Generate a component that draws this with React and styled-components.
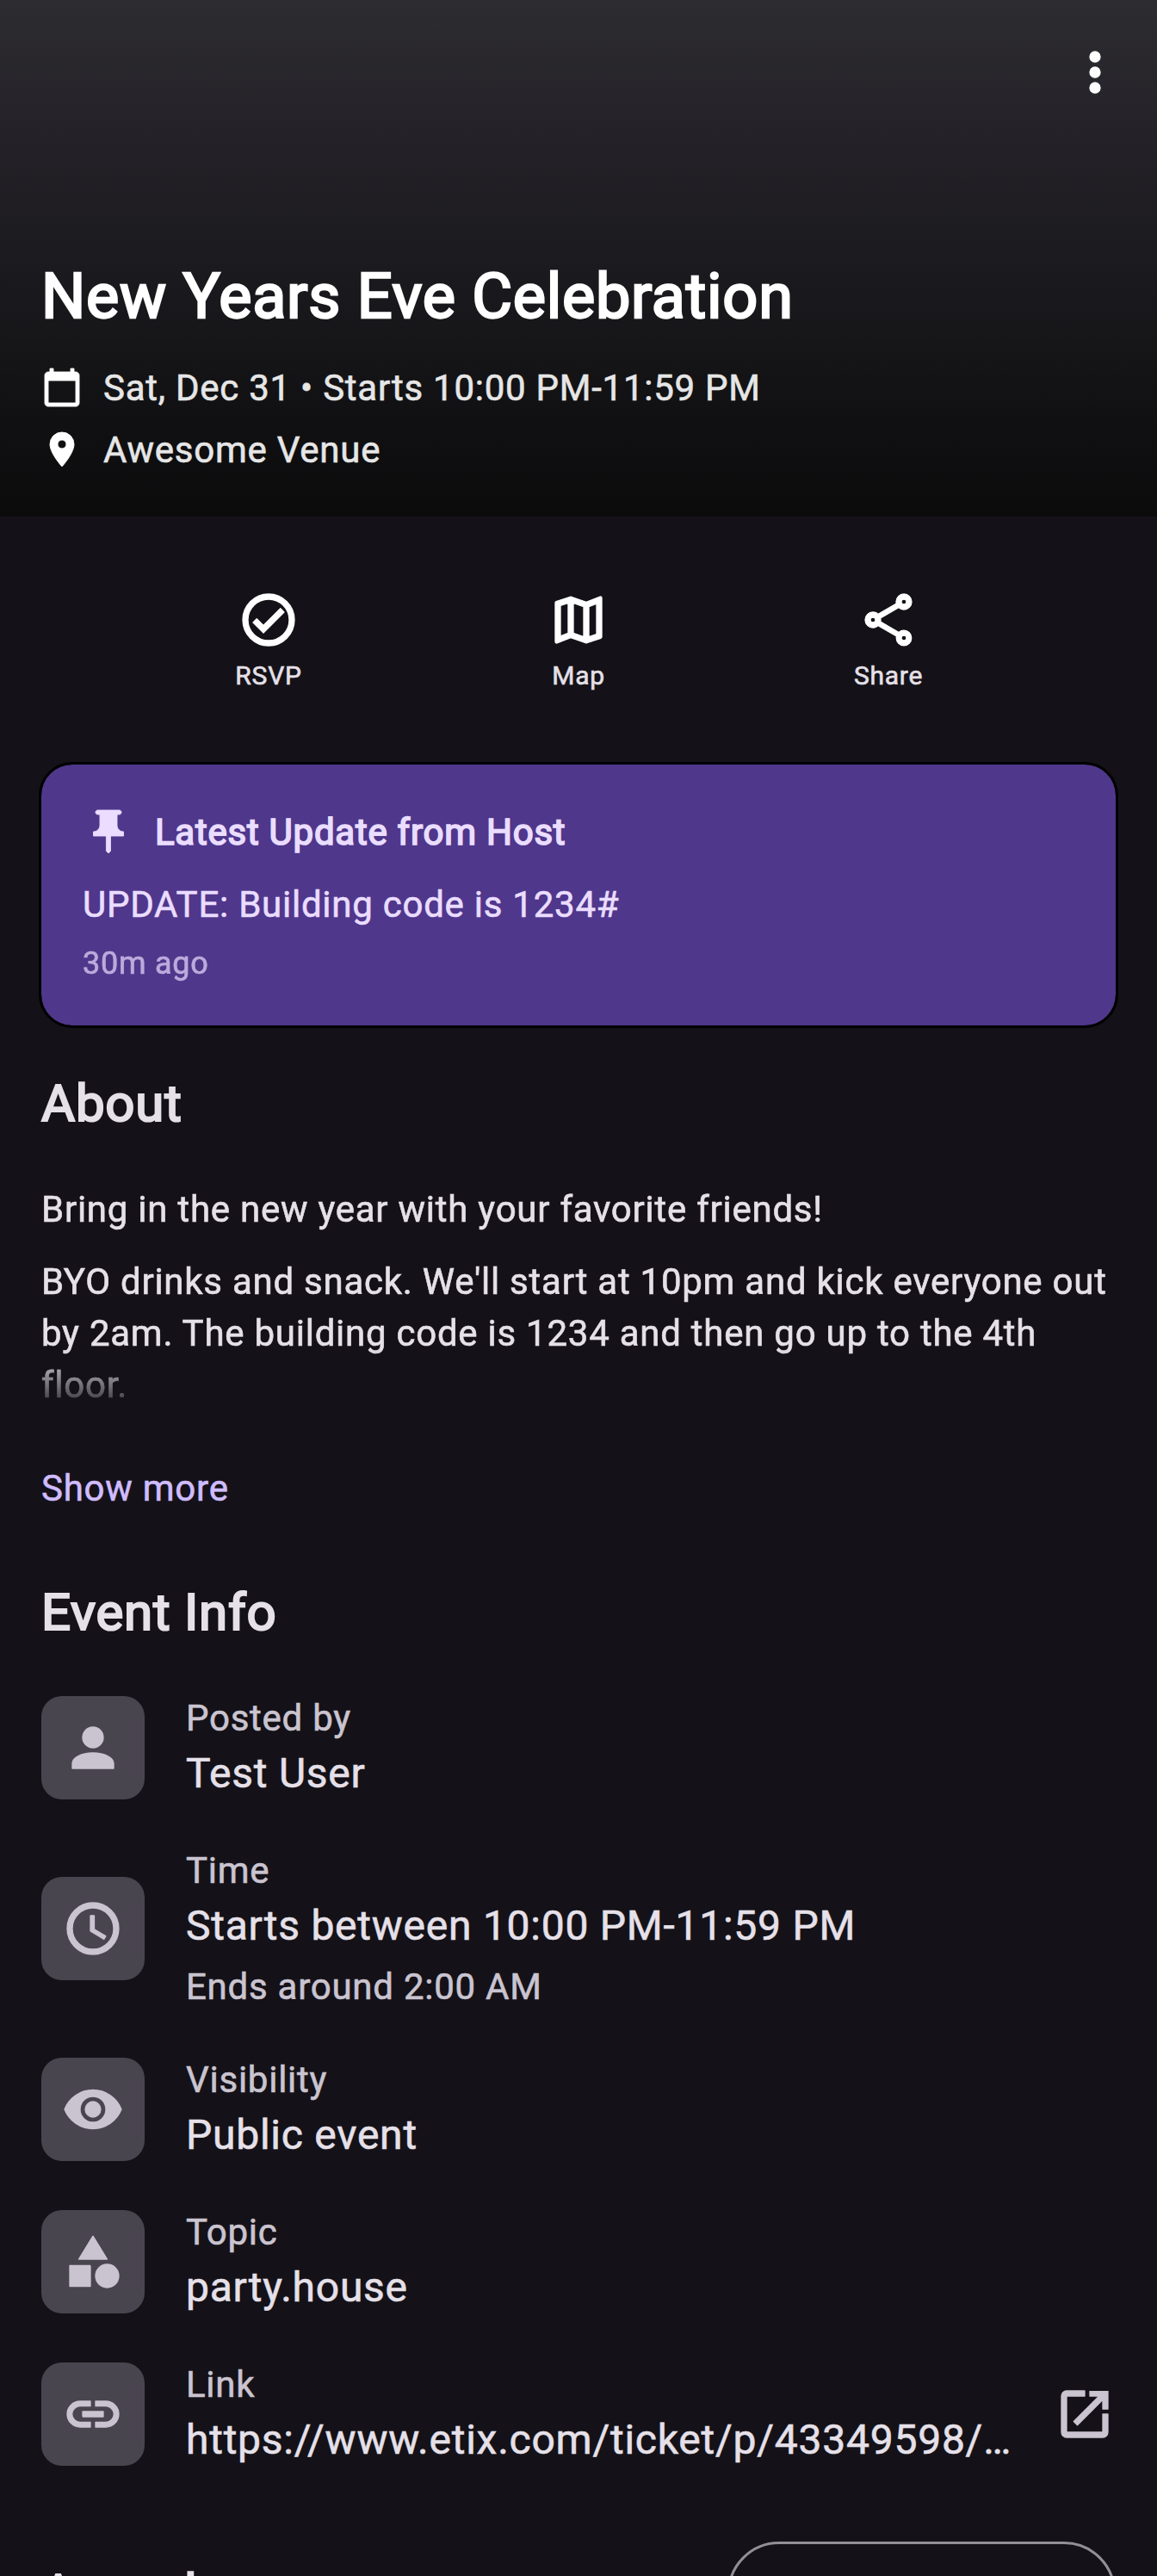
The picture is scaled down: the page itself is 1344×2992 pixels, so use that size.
import React from "react";
import styled, { createGlobalStyle } from "styled-components";

const colors = {
  background: "#141218",
  text: "#e6e0e9",
  muted: "#cac4d0",
  tile: "#49454f",
  primary: "#d0bcff",
  container: "#4f378b",
  onContainer: "#eaddff",
  outline: "#938f99",
};

const GlobalStyle = createGlobalStyle`
  *, *::before, *::after { box-sizing: border-box; }
  body { margin: 0; background: ${colors.background}; }
`;

const Screen = styled.main`
  width: 1344px;
  height: 2992px;
  overflow: hidden;
  background: ${colors.background};
  color: ${colors.text};
  font-family: Roboto, "Liberation Sans", sans-serif;
  font-size: 42px;
  line-height: 60px;
  letter-spacing: 0.75px;
  -webkit-text-stroke: 0.6px currentColor;
`;

/* Heavier text is the regular cut with a thickened outline. */
const Heading = styled.h2`
  margin: 0;
  font-weight: 400;
  font-size: 60px;
  line-height: 84px;
  -webkit-text-stroke: 2.2px currentColor;
`;

const Svg = styled.svg`
  display: block;
  flex: none;
  width: ${(p) => p.$size}px;
  height: ${(p) => p.$size}px;
  fill: currentColor;
  stroke: currentColor;
  stroke-width: ${(p) => (24 * p.$weight) / p.$size};
  stroke-linejoin: round;
`;

const Icon = ({ d, size = 72, weight = 1.3 }) => (
  <Svg viewBox="0 0 24 24" $size={size} $weight={weight} aria-hidden="true">
    <path d={d} />
  </Svg>
);

const paths = {
  dots: "M12,16A2,2 0 0,1 14,18A2,2 0 0,1 12,20A2,2 0 0,1 10,18A2,2 0 0,1 12,16M12,10A2,2 0 0,1 14,12A2,2 0 0,1 12,14A2,2 0 0,1 10,12A2,2 0 0,1 12,10M12,4A2,2 0 0,1 14,6A2,2 0 0,1 12,8A2,2 0 0,1 10,6A2,2 0 0,1 12,4Z",
  calendar:
    "M20 3h-1V1h-2v2H7V1H5v2H4c-1.1 0-2 .9-2 2v16c0 1.1.9 2 2 2h16c1.1 0 2-.9 2-2V5c0-1.1-.9-2-2-2zm0 18H4V8h16v13z",
  marker:
    "M12,11.5A2.5,2.5 0 0,1 9.5,9A2.5,2.5 0 0,1 12,6.5A2.5,2.5 0 0,1 14.5,9A2.5,2.5 0 0,1 12,11.5M12,2A7,7 0 0,0 5,9C5,14.25 12,22 12,22C12,22 19,14.25 19,9A7,7 0 0,0 12,2Z",
  check:
    "M12 2C6.5 2 2 6.5 2 12S6.5 22 12 22 22 17.5 22 12 17.5 2 12 2M12 20C7.59 20 4 16.41 4 12S7.59 4 12 4 20 7.59 20 12 16.41 20 12 20M16.59 7.58L10 14.17L7.41 11.59L6 13L10 17L18 9L16.59 7.58Z",
  map: "M20.5,3L20.34,3.03L15,5.1L9,3L3.36,4.9C3.15,4.97 3,5.15 3,5.38V20.5A0.5,0.5 0 0,0 3.5,21L3.66,20.97L9,18.9L15,21L20.64,19.1C20.85,19.03 21,18.85 21,18.62V3.5A0.5,0.5 0 0,0 20.5,3M10,5.47L14,6.87V18.53L10,17.13V5.47M5,6.46L8,5.45V17.15L5,18.31V6.46M19,17.54L16,18.55V6.86L19,5.7V17.54Z",
  share:
    "M18 16.08C17.24 16.08 16.56 16.38 16.04 16.85L8.91 12.7C8.96 12.47 9 12.24 9 12S8.96 11.53 8.91 11.3L15.96 7.19C16.5 7.69 17.21 8 18 8C19.66 8 21 6.66 21 5S19.66 2 18 2 15 3.34 15 5C15 5.24 15.04 5.47 15.09 5.7L8.04 9.81C7.5 9.31 6.79 9 6 9C4.34 9 3 10.34 3 12S4.34 15 6 15C6.79 15 7.5 14.69 8.04 14.19L15.16 18.34C15.11 18.55 15.08 18.77 15.08 19C15.08 20.61 16.39 21.91 18 21.91S20.92 20.61 20.92 19 19.61 16.08 18 16.08M18 4C18.55 4 19 4.45 19 5S18.55 6 18 6 17 5.55 17 5 17.45 4 18 4M6 13C5.45 13 5 12.55 5 12S5.45 11 6 11 7 11.45 7 12 6.55 13 6 13M18 20C17.45 20 17 19.55 17 19S17.45 18 18 18 19 18.45 19 19 18.55 20 18 20Z",
  pin: "M16 9V4h1c.55 0 1-.45 1-1s-.45-1-1-1H7c-.55 0-1 .45-1 1s.45 1 1 1h1v5c0 1.66-1.34 3-3 3v2h5.97v7l1 1 1-1v-7H19v-2c-1.66 0-3-1.34-3-3z",
  person:
    "M12,4A4,4 0 0,1 16,8A4,4 0 0,1 12,12A4,4 0 0,1 8,8A4,4 0 0,1 12,4M12,14C16.42,14 20,15.79 20,18V20H4V18C4,15.79 7.58,14 12,14Z",
  clock:
    "M12,20A8,8 0 0,0 20,12A8,8 0 0,0 12,4A8,8 0 0,0 4,12A8,8 0 0,0 12,20M12,2A10,10 0 0,1 22,12A10,10 0 0,1 12,22C6.47,22 2,17.5 2,12A10,10 0 0,1 12,2M12.5,7V12.25L17,14.92L16.25,16.15L11,13V7H12.5Z",
  eye: "M12,9A3,3 0 0,0 9,12A3,3 0 0,0 12,15A3,3 0 0,0 15,12A3,3 0 0,0 12,9M12,17A5,5 0 0,1 7,12A5,5 0 0,1 12,7A5,5 0 0,1 17,12A5,5 0 0,1 12,17M12,4.5C7,4.5 2.73,7.61 1,12C2.73,16.39 7,19.5 12,19.5C17,19.5 21.27,16.39 23,12C21.27,7.61 17,4.5 12,4.5Z",
  shapes:
    "M11,13.5V21.5H3V13.5H11M12,2L17.5,11H6.5L12,2M17.5,13C20,13 22,15 22,17.5C22,20 20,22 17.5,22C15,22 13,20 13,17.5C13,15 15,13 17.5,13Z",
  link: "M3.9,12C3.9,10.29 5.29,8.9 7,8.9H11V7H7A5,5 0 0,0 2,12A5,5 0 0,0 7,17H11V15.1H7C5.29,15.1 3.9,13.71 3.9,12M8,13H16V11H8V13M17,7H13V8.9H17C18.71,8.9 20.1,10.29 20.1,12C20.1,13.71 18.71,15.1 17,15.1H13V17H17A5,5 0 0,0 22,12A5,5 0 0,0 17,7Z",
  open: "M14,3V5H17.59L7.76,14.83L9.17,16.24L19,6.41V10H21V3M19,19H5V5H12V3H5C3.89,3 3,3.9 3,5V19A2,2 0 0,0 5,21H19A2,2 0 0,0 21,19V12H19V19Z",
};

const Hero = styled.header`
  display: flex;
  flex-direction: column;
  height: 600px;
  padding: 48px 36px 47px 48px;
  color: #fff;
  background: linear-gradient(
    #2d2c31 0,
    #242228 160px,
    #1c1b20 290px,
    #17171a 380px,
    #111113 480px,
    #0b0b0c 600px
  );
`;

const MenuButton = styled.button`
  align-self: flex-end;
  padding: 0;
  border: 0;
  background: none;
  color: inherit;
`;

const Title = styled.h1`
  margin: auto 0 27px;
  font-weight: 400;
  font-size: 72px;
  line-height: 96px;
  -webkit-text-stroke: 2.5px currentColor;
`;

const Facts = styled.div`
  display: flex;
  flex-direction: column;
  gap: 11px;
`;

const Fact = styled.div`
  display: flex;
  align-items: flex-start;
  gap: 24px;
  line-height: 61px;

  & > svg { margin-top: 6px; }
  & > span { color: #e6e6e6; -webkit-text-stroke-color: #e6e6e6; }
`;

const Actions = styled.nav`
  display: flex;
  justify-content: center;
  padding: 84px 0 78px;
`;

const Action = styled.button`
  display: flex;
  flex-direction: column;
  align-items: center;
  gap: 6px;
  width: 360px;
  padding: 0;
  border: 0;
  background: none;
  color: #fff;
  font: inherit;
  font-size: 30px;
  line-height: 45px;
  letter-spacing: inherit;

  & > span { color: ${colors.text}; }
`;

const UpdateCard = styled.section`
  margin: 0 45px;
  padding: 48px;
  border: 3px solid #000;
  border-radius: 39px;
  background: ${colors.container};
  background-clip: padding-box;
  color: ${colors.onContainer};
  line-height: 61px;
`;

const UpdateHeader = styled.div`
  display: flex;
  align-items: flex-start;
  gap: 24px;
  margin-bottom: 23px;
`;

const UpdateTitle = styled.span`
  -webkit-text-stroke: 1.7px currentColor;
`;

const UpdateTime = styled.div`
  margin-top: 14px;
  font-size: 36px;
  line-height: 48px;
  opacity: 0.7;
`;

const Section = styled.section`
  padding: 0 48px;
  margin-top: ${(p) => p.$top}px;
`;

const Description = styled.div`
  display: flex;
  flex-direction: column;
  gap: 24px;
  margin: 51px -24px 60px 0;
  mask-image: linear-gradient(#000 calc(100% - 72px), transparent calc(100% + 6px));

  & > p { margin: 0; }
`;

const ShowMore = styled.a`
  display: block;
  color: ${colors.primary};
`;

const InfoList = styled.div`
  display: flex;
  flex-direction: column;
  gap: 48px;
  margin-top: 50px;
`;

const InfoRow = styled.div`
  display: flex;
  align-items: center;
  gap: 48px;
  color: ${colors.muted};
`;

const Tile = styled.div`
  display: flex;
  flex: none;
  align-items: center;
  justify-content: center;
  width: 120px;
  height: 120px;
  border-radius: 24px;
  background: ${colors.tile};
`;

const InfoText = styled.div`
  flex: 1;
  min-width: 0;
  white-space: nowrap;
`;

const Label = styled.div`
  line-height: 61px;
`;

const Value = styled.div`
  color: ${colors.text};
  font-size: 48px;
  line-height: 68px;
`;

const Note = styled.div`
  margin-top: 7px;
  line-height: 59px;
`;

const SectionBar = styled.div`
  display: flex;
  align-items: center;
  justify-content: space-between;
`;

const OutlineButton = styled.button`
  width: 451px;
  height: 120px;
  padding: 0;
  border: 3px solid ${colors.outline};
  border-radius: 60px;
  background: none;
`;

const actions = [
  { icon: "check", label: "RSVP" },
  { icon: "map", label: "Map" },
  { icon: "share", label: "Share" },
];

const info = [
  { icon: "person", label: "Posted by", value: "Test User" },
  {
    icon: "clock",
    label: "Time",
    value: "Starts between 10:00 PM-11:59 PM",
    note: "Ends around 2:00 AM",
  },
  { icon: "eye", label: "Visibility", value: "Public event" },
  { icon: "shapes", label: "Topic", value: "party.house" },
  {
    icon: "link",
    label: "Link",
    value: "https://www.etix.com/ticket/p/43349598/…",
    external: true,
  },
];

export default function App() {
  return (
    <Screen>
      <GlobalStyle />
      <Hero>
        <MenuButton aria-label="More">
          <Icon d={paths.dots} />
        </MenuButton>
        <Title>New Years Eve Celebration</Title>
        <Facts>
          <Fact>
            <Icon d={paths.calendar} size={48} weight={0.9} />
            <span>Sat, Dec 31 • Starts 10:00 PM-11:59 PM</span>
          </Fact>
          <Fact>
            <Icon d={paths.marker} size={48} weight={0.9} />
            <span>Awesome Venue</span>
          </Fact>
        </Facts>
      </Hero>

      <Actions>
        {actions.map((a) => (
          <Action key={a.label}>
            <Icon d={paths[a.icon]} />
            <span>{a.label}</span>
          </Action>
        ))}
      </Actions>

      <UpdateCard>
        <UpdateHeader>
          <Icon d={paths.pin} size={60} weight={0.9} />
          <UpdateTitle>Latest Update from Host</UpdateTitle>
        </UpdateHeader>
        <div>UPDATE: Building code is 1234#</div>
        <UpdateTime>30m ago</UpdateTime>
      </UpdateCard>

      <Section $top={46}>
        <Heading>About</Heading>
        <Description>
          <p>Bring in the new year with your favorite friends!</p>
          <p>
            BYO drinks and snack. We'll start at 10pm and kick everyone out
            <br />
            by 2am. The building code is 1234 and then go up to the 4th
            <br />
            floor.
          </p>
        </Description>
        <ShowMore>Show more</ShowMore>
      </Section>

      <Section $top={72}>
        <Heading>Event Info</Heading>
        <InfoList>
          {info.map((row) => (
            <InfoRow key={row.label}>
              <Tile>
                <Icon d={paths[row.icon]} />
              </Tile>
              <InfoText>
                <Label>{row.label}</Label>
                <Value>{row.value}</Value>
                {row.note && <Note>{row.note}</Note>}
              </InfoText>
              {row.external && <Icon d={paths.open} />}
            </InfoRow>
          ))}
        </InfoList>
      </Section>

      <Section $top={84}>
        <SectionBar>
          <Heading>Attendees</Heading>
          <OutlineButton aria-label="Attendee options" />
        </SectionBar>
      </Section>
    </Screen>
  );
}
